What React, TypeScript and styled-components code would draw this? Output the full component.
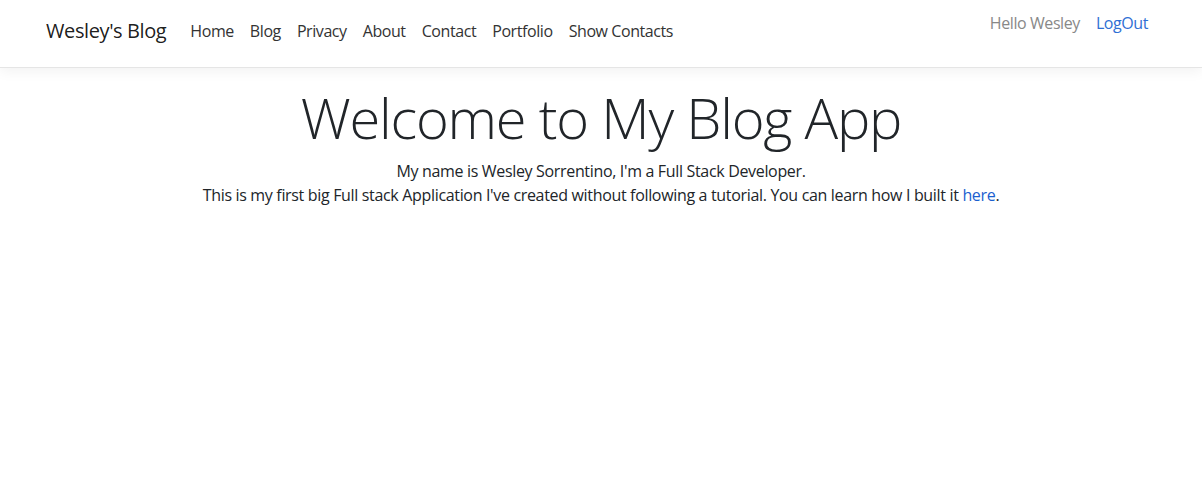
import React from "react";
import styled, { createGlobalStyle } from "styled-components";

const GlobalStyle = createGlobalStyle`
  html, body { margin: 0; padding: 0; background: #fff; }
  body {
    font-family: "Open Sans", "Noto Sans", "Liberation Sans", sans-serif;
    font-size: 16px;
    line-height: 1.5;
    color: #212529;
  }
  * { box-sizing: border-box; }
`;

const Header = styled.header`
  background: #fff;
  border-bottom: 1px solid #e5e5e5;
  box-shadow: 0 4px 12px rgba(0, 0, 0, 0.05);
`;

const NavBar = styled.nav`
  max-width: 1140px;
  margin: 0 auto;
  padding: 0 15px 6px;
  height: 67px;
  display: flex;
  align-items: center;
`;

const Brand = styled.a`
  font-size: 20px;
  line-height: 30px;
  color: rgba(0, 0, 0, 0.9);
  text-decoration: none;
  margin-right: 16px;
  letter-spacing: -0.4px;
`;

const NavList = styled.ul<{ $right?: boolean }>`
  list-style: none;
  margin: 0;
  padding: 0;
  display: flex;
  margin-left: ${(p) => (p.$right ? "auto" : "0")};
  align-self: ${(p) => (p.$right ? "flex-start" : "center")};
  padding-top: ${(p) => (p.$right ? "3px" : "0")};
`;

const NavLink = styled.a<{ $tone?: "dark" | "muted" | "blue" }>`
  display: block;
  padding: 8px;
  font-size: 16px;
  line-height: 24px;
  letter-spacing: -0.42px;
  text-decoration: none;
  color: ${(p) =>
    p.$tone === "muted" ? "#888" : p.$tone === "blue" ? "#2f6fd4" : "#333"};
`;

const Main = styled.main`
  max-width: 1140px;
  margin: 0 auto;
  padding: 16px 15px 0;
  text-align: center;
`;

const Title = styled.h1`
  font-size: 56px;
  font-weight: 300;
  line-height: 1.2;
  margin: 0 0 8px;
  color: #212529;
  letter-spacing: -1.2px;
`;

const Para = styled.p`
  margin: 0;
  font-size: 16px;
  line-height: 24px;
  letter-spacing: -0.33px;
`;

const InlineLink = styled.a`
  color: #1b5fcf;
  text-decoration: none;
`;

export default function App() {
  const links = ["Home", "Blog", "Privacy", "About", "Contact", "Portfolio", "Show Contacts"];
  return (
    <>
      <GlobalStyle />
      <Header>
        <NavBar>
          <Brand href="#">Wesley's Blog</Brand>
          <NavList>
            {links.map((l) => (
              <li key={l}>
                <NavLink href="#">{l}</NavLink>
              </li>
            ))}
          </NavList>
          <NavList $right>
            <li>
              <NavLink $tone="muted">Hello Wesley</NavLink>
            </li>
            <li>
              <NavLink $tone="blue" href="#">LogOut</NavLink>
            </li>
          </NavList>
        </NavBar>
      </Header>
      <Main>
        <Title>Welcome to My Blog App</Title>
        <Para>My name is Wesley Sorrentino, I'm a Full Stack Developer.</Para>
        <Para>
          This is my first big Full stack Application I've created without following a tutorial. You can learn how I built it{" "}
          <InlineLink href="#">here</InlineLink>.
        </Para>
      </Main>
    </>
  );
}
